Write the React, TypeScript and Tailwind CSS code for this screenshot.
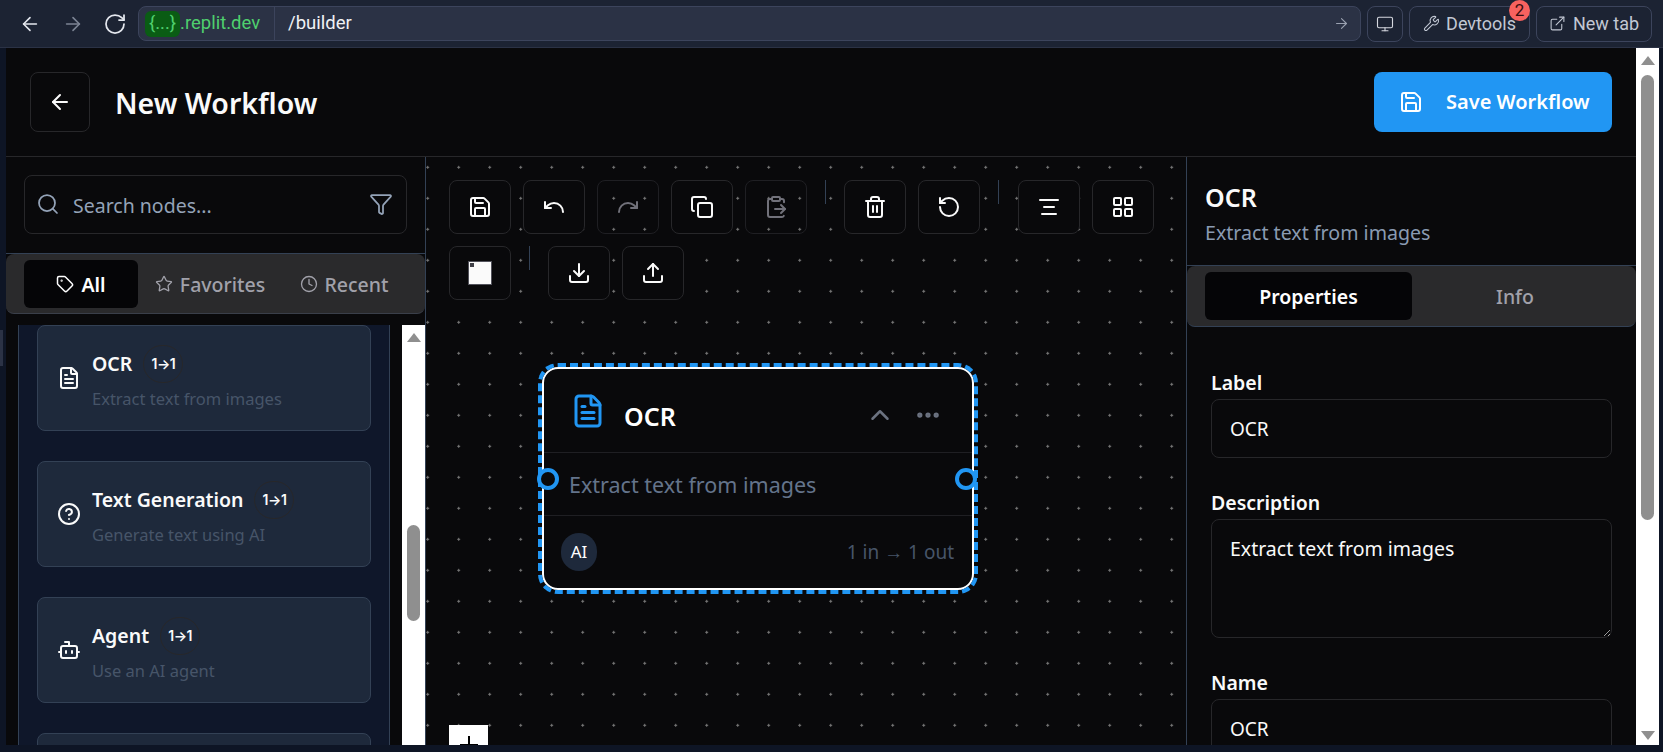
import {
  ArrowLeft,
  ArrowRight,
  Bot,
  ChevronUp,
  CircleHelp,
  ClipboardPaste,
  Clock,
  Copy,
  Download,
  Ellipsis,
  ExternalLink,
  FileText,
  Filter,
  LayoutGrid,
  Monitor,
  Redo,
  RotateCcw,
  RotateCw,
  Save,
  Search,
  Star,
  Tag,
  Trash2,
  AlignCenter,
  Undo,
  Upload,
  Wrench,
} from 'lucide-react'

const nodeTypes = [
  { name: 'OCR', desc: 'Extract text from images', Icon: FileText },
  { name: 'Text Generation', desc: 'Generate text using AI', Icon: CircleHelp },
  { name: 'Agent', desc: 'Use an AI agent', Icon: Bot },
]

function ToolButton({ children, disabled }: { children: React.ReactNode; disabled?: boolean }) {
  return (
    <button
      type="button"
      className={
        disabled
          ? 'w-[62px] h-[54px] shrink-0 rounded-lg border border-[#1f1f23] flex items-center justify-center text-[#71717a]'
          : 'w-[62px] h-[54px] shrink-0 rounded-lg border border-[#27272a] bg-[#09090b] flex items-center justify-center text-[#fafafa]'
      }
    >
      {children}
    </button>
  )
}

function Sep() {
  return <div className="w-px h-6 mx-1.5 shrink-0 bg-[#334155]" />
}

function Field({ label, value }: { label: string; value: string }) {
  return (
    <div>
      <label className="block h-[26px] mb-[3px] text-[19.5px] leading-[26px] font-semibold text-[#fafafa]">{label}</label>
      <input
        readOnly
        value={value}
        className="w-full h-[59px] px-[18px] rounded-lg border border-[#27272a] bg-[#09090b] text-[19px] text-[#fafafa] outline-none"
      />
    </div>
  )
}

function BrowserBar() {
  return (
    <div className="h-12 shrink-0 flex items-center bg-[#1c2333] border-b border-[#2b3245] pl-[19px] font-['Roboto',sans-serif]">
      <ArrowLeft size={22} className="text-[#e4e7ee]" strokeWidth={1.75} />
      <ArrowRight size={22} className="ml-[21px] text-[#7c8494]" strokeWidth={1.75} />
      <RotateCw size={24} className="ml-[19px] text-[#e4e7ee]" strokeWidth={1.75} />
      <div className="ml-[11px] w-[1223px] h-[35px] flex items-center rounded-lg border border-[#3c445c] bg-[#2b3245]">
        <div className="w-[136px] shrink-0 flex items-center h-full pl-[6px] border-r border-[#3c445c] text-[18.5px] text-[#4fcf6e]">
          <span className="h-[26px] w-[35px] rounded-md bg-[#0a5c14] flex items-center justify-center">{'{...}'}</span>
          .replit.dev
        </div>
        <span className="ml-[13px] text-[18.5px] text-[#f0f1f4]">/builder</span>
        <ArrowRight size={17} className="ml-auto mr-[10px] text-[#9aa1b0]" strokeWidth={1.5} />
      </div>
      <button type="button" className="ml-[6px] w-[36px] h-[36px] rounded-lg border border-[#3c445c] flex items-center justify-center text-[#d5d8df]">
        <Monitor size={18} strokeWidth={1.5} />
      </button>
      <button type="button" className="relative ml-[6px] w-[121px] h-[36px] rounded-lg border border-[#3c445c] flex items-center justify-center gap-[6px] text-[18px] text-[#c2c8d4]">
        <Wrench size={17} strokeWidth={1.5} />
        Devtools
        <span className="absolute -top-[7px] left-[99px] w-[21px] h-[21px] rounded-full bg-[#f8625f] flex items-center justify-center text-[17px] leading-none text-[#3a0f10]">2</span>
      </button>
      <button type="button" className="ml-[6px] w-[116px] h-[36px] rounded-lg border border-[#3c445c] flex items-center justify-center gap-[7px] text-[18px] text-[#c2c8d4]">
        <ExternalLink size={17} strokeWidth={1.5} />
        New tab
      </button>
    </div>
  )
}

function LeftPanel() {
  return (
    <div className="w-[420px] shrink-0 flex flex-col border-r border-[#334155] overflow-hidden">
      <div className="h-[97px] shrink-0 pt-[18px] pl-[18px] border-b border-[#334155]">
        <div className="w-[383px] h-[59px] flex items-center gap-[13px] pl-[11px] pr-[13px] rounded-lg border border-[#27272a] text-[#94a3b8]">
          <Search size={24} strokeWidth={1.75} className="shrink-0 -mt-[2px]" />
          <input readOnly placeholder="Search nodes..." className="flex-1 min-w-0 mt-[2px] bg-transparent outline-none text-[19.5px] placeholder:text-[#94a3b8]" />
          <Filter size={24} strokeWidth={1.75} className="shrink-0 -mt-[2px]" />
        </div>
      </div>

      <div className="h-[60px] shrink-0 flex pl-[18px] pt-[6px] rounded-lg bg-[#2a2a2c] border-b border-[#3a3f4a] text-[19.5px] font-medium text-[#a1a1aa]">
        <div className="w-[114px] h-[48px] pt-[2px] rounded-md bg-[#050507] flex items-center justify-center gap-[7px] text-white font-semibold">
          <Tag size={18} className="-mt-[2px]" />
          All
        </div>
        <div className="w-[144px] h-[48px] pt-[2px] flex items-center justify-center gap-[7px]">
          <Star size={18} strokeWidth={1.75} className="-mt-[2px]" />
          Favorites
        </div>
        <div className="w-[124px] h-[48px] pt-[2px] flex items-center justify-center gap-[7px]">
          <Clock size={18} strokeWidth={1.75} className="-mt-[2px]" />
          Recent
        </div>
      </div>

      <div className="mt-[11px] flex-1 min-h-0 flex pl-3 gap-3">
        <div className="w-[372px] shrink-0 bg-[#0f172a] border-x border-[#334155] px-[18px] flex flex-col gap-[30px] overflow-hidden">
          {[...nodeTypes, null].map((node, i) => (
            <div key={i} className="h-[106px] shrink-0 rounded-lg border border-[#334155] bg-[#1e293b] flex items-center pl-[19px] text-[#fafafa]">
              {node && (
                <>
                  <node.Icon size={24} className="shrink-0" />
                  <div className="ml-[11px]">
                    <div className="flex items-center gap-[11px] -mt-[2px]">
                      <span className="text-[19.5px] leading-[26px] font-semibold">{node.name}</span>
                      <span className="w-[40px] h-[38px] rounded-full border border-[#27272a] flex items-center justify-center font-['Inter',sans-serif] text-[14px] font-semibold tracking-[-0.5px]">1→1</span>
                    </div>
                    <div className="mt-[5px] text-[16.5px] leading-[22px] text-[#475569]">{node.desc}</div>
                  </div>
                </>
              )}
            </div>
          ))}
        </div>
        <div className="w-[23px] shrink-0 bg-white flex flex-col items-center pt-[8px]">
          <div className="w-0 h-0 border-x-[7px] border-x-transparent border-b-[9px] border-b-[#8f8f8f]" />
          <div className="mt-[183px] w-[13px] h-[96px] rounded-full bg-[#8f8f8f]" />
        </div>
      </div>
    </div>
  )
}

function WorkflowNode() {
  return (
    <div className="absolute left-[116px] top-[210px] w-[432px] h-[223px] rounded-2xl border-2 border-white bg-[#09090b] outline-4 outline-dashed outline-[#2196f3] flex flex-col">
      <div className="h-[84px] shrink-0 flex items-center pl-[26px] pr-[30px] border-b border-[#1f1f23]">
        <FileText size={36} className="-mt-[0px] text-[#2196f3]" />
        <span className="ml-[18px] mt-[12px] text-[25px] font-semibold text-white">OCR</span>
        <ChevronUp size={30} strokeWidth={2} className="ml-auto mt-[8px] text-[#6b7280]" />
        <Ellipsis size={28} strokeWidth={2.5} className="ml-[19px] mt-[8px] text-[#6b7280]" />
      </div>
      <div className="h-[63px] shrink-0 flex items-center pl-[25px] pt-[2px] border-b border-[#1f1f23] text-[21.5px] text-[#64748b]">
        Extract text from images
      </div>
      <div className="flex-1 flex items-center justify-between pl-[17px] pr-[18px]">
        <span className="w-[36px] h-[38px] rounded-full bg-[#1e293b] flex items-center justify-center text-[17px] text-white">AI</span>
        <span className="text-[19px] text-[#475569]">1 in → 1 out</span>
      </div>
      <span className="absolute -left-[7px] top-[99px] w-[22px] h-[22px] rounded-full border-4 border-[#2196f3] bg-[#09090b]" />
      <span className="absolute -right-[5px] top-[99px] w-[22px] h-[22px] rounded-full border-4 border-[#2196f3] bg-[#09090b]" />
    </div>
  )
}

function Canvas() {
  return (
    <div className="relative flex-1 min-w-0 overflow-hidden bg-[#09090b] bg-[radial-gradient(circle,#777_1px,transparent_1.3px)] bg-[size:31px_31px] bg-[position:-13.8px_-5.2px]">
      <div className="absolute left-[23px] top-[23px] w-[720px] flex flex-wrap gap-3">
        <ToolButton><Save size={24} /></ToolButton>
        <ToolButton><Undo size={24} /></ToolButton>
        <ToolButton disabled><Redo size={24} /></ToolButton>
        <ToolButton><Copy size={24} /></ToolButton>
        <ToolButton disabled><ClipboardPaste size={24} /></ToolButton>
        <Sep />
        <ToolButton><Trash2 size={24} /></ToolButton>
        <ToolButton><RotateCcw size={24} /></ToolButton>
        <Sep />
        <div className="w-px -ml-3 shrink-0" />
        <ToolButton><AlignCenter size={24} /></ToolButton>
        <ToolButton><LayoutGrid size={24} /></ToolButton>
        <ToolButton>
          <span className="relative w-[24px] h-[24px] bg-[#fafafa] border border-[#52525b]">
            <span className="absolute left-[1px] top-[1px] w-[4px] h-[4px] bg-[#3f3f46]" />
          </span>
        </ToolButton>
        <Sep />
        <ToolButton><Download size={24} /></ToolButton>
        <ToolButton><Upload size={24} /></ToolButton>
      </div>

      <WorkflowNode />

      {/* flow controls, cut off by the bottom of the window */}
      <div className="absolute left-[23px] top-[568px] w-[39px] h-[39px] bg-white flex items-center justify-center text-black">
        <svg width="20" height="20" viewBox="0 0 20 20" fill="currentColor">
          <path d="M9 1h2v8h8v2h-8v8H9v-8H1V9h8z" />
        </svg>
      </div>
    </div>
  )
}

function RightPanel() {
  return (
    <div className="w-[450px] shrink-0 flex flex-col border-l border-[#334155] overflow-hidden">
      <div className="h-[109px] shrink-0 pl-[18px] pt-[21px] border-b border-[#334155]">
        <div className="text-[25px] leading-[38px] font-semibold text-[#fafafa]">OCR</div>
        <div className="text-[19.6px] leading-[28px] mt-[3px] text-[#8a9bb2]">Extract text from images</div>
      </div>
      <div className="h-[61px] shrink-0 flex pl-[18px] pt-[6px] rounded-lg bg-[#2a2a2c] border-b border-[#334155] text-[19.5px]">
        <div className="w-[207px] h-[48px] pt-[2px] rounded-md bg-[#050507] flex items-center justify-center font-semibold text-white">Properties</div>
        <div className="w-[206px] h-[48px] pt-[2px] flex items-center justify-center font-medium text-[#a1a1aa]">Info</div>
      </div>
      <div className="pt-[43px] px-6 flex flex-col gap-8">
        <Field label="Label" value="OCR" />
        <div>
          <label className="block h-[26px] mb-[3px] text-[19.5px] leading-[26px] font-semibold text-[#fafafa]">Description</label>
          <textarea
            readOnly
            value="Extract text from images"
            className="block w-full h-[119px] px-[18px] py-[15px] rounded-lg border border-[#27272a] bg-[#09090b] text-[19.5px] leading-[28px] text-[#fafafa] outline-none resize-y"
          />
        </div>
        <Field label="Name" value="OCR" />
      </div>
    </div>
  )
}

export default function App() {
  return (
    <div className="relative h-screen w-screen overflow-hidden flex flex-col bg-[#0e1525] font-['Noto_Sans',sans-serif]">
      <BrowserBar />
      <div className="flex-1 min-h-0 flex pl-[6px] pr-[4px] pb-[7px]">
        <div className="flex-1 min-w-0 flex flex-col bg-[#09090b]">
          <div className="h-[109px] shrink-0 flex items-center pl-6 pr-[24px] border-b border-[#27272a]">
            <button type="button" className="w-[60px] h-[60px] rounded-lg border border-[#27272a] flex items-center justify-center text-[#fafafa]">
              <ArrowLeft size={24} />
            </button>
            <h1 className="ml-[25px] mt-[2px] text-[28.5px] font-semibold text-[#fafafa]">New Workflow</h1>
            <button type="button" className="ml-auto w-[238px] h-[60px] rounded-lg bg-[#2196f3] flex items-center pl-[25px] text-[20px] font-semibold text-white">
              <Save size={24} />
              <span className="ml-[23px]">Save Workflow</span>
            </button>
          </div>
          <div className="flex-1 min-h-0 flex">
            <LeftPanel />
            <Canvas />
            <RightPanel />
          </div>
        </div>
        {/* page scrollbar */}
        <div className="w-[23px] shrink-0 bg-white flex flex-col items-center pt-[8px]">
          <div className="w-0 h-0 border-x-[7px] border-x-transparent border-b-[9px] border-b-[#8f8f8f]" />
          <div className="mt-[10px] w-[13px] h-[445px] rounded-full bg-[#8f8f8f]" />
          <div className="mt-auto mb-[5px] w-0 h-0 border-x-[7px] border-x-transparent border-t-[9px] border-t-[#8f8f8f]" />
        </div>
      </div>
      <div className="absolute left-0 top-[330px] w-[3px] h-[36px] bg-[#2b3245]" />
    </div>
  )
}
